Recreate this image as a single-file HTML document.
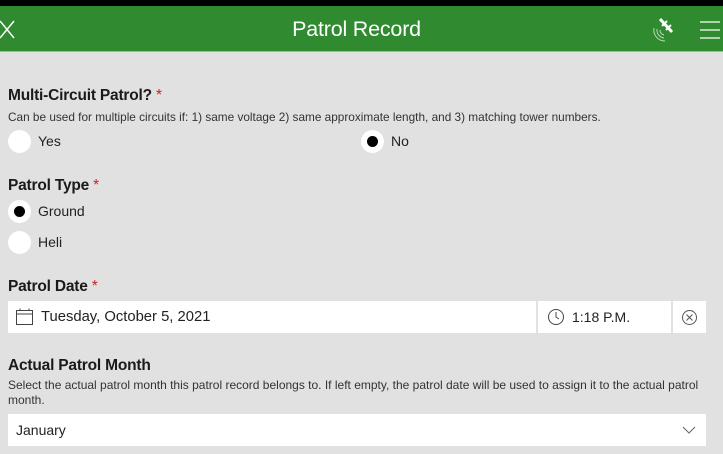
<!DOCTYPE html>
<html><head><meta charset="utf-8"><style>
*{margin:0;padding:0;box-sizing:border-box}
body{width:723px;height:454px;overflow:hidden;background:#e1e1e1;font-family:"Liberation Sans",sans-serif;color:#1a1a1a;position:relative}
.a{position:absolute;white-space:nowrap}
.top{left:0;top:0;width:723px;height:6px;background:#000}
.hdr{left:0;top:6px;width:723px;height:46px;background:#2f8a30;border-bottom:1px solid #8fc48f}
.title{left:-5px;width:723px;top:17px;text-align:center;color:#fff;font-family:"Liberation Sans",sans-serif;font-size:21.5px;letter-spacing:-0.2px}
.lbl{font-size:15.5px;font-weight:bold;font-family:"Liberation Sans Narrow","Liberation Sans",sans-serif;letter-spacing:-0.2px}
.star{color:#c22;font-weight:normal}
.desc{font-size:11.8px;font-family:"Liberation Sans Narrow","Liberation Sans",sans-serif;color:#333}
.rad{width:23px;height:23px;border-radius:50%;background:#fff}
.rad.on::after{content:"";position:absolute;left:6px;top:6px;width:11px;height:11px;border-radius:50%;background:#000}
.opt{font-size:14px;font-family:"Liberation Sans",sans-serif;color:#222}
.box{background:#fff}
</style></head><body>
<div class="a top"></div>
<div class="a hdr"></div>
<svg class="a" style="left:0;top:19px" width="16" height="22"><path d="M0 2 L14 19 M14 2 L0 19" stroke="#fff" stroke-width="1.5" fill="none"/></svg>
<div class="a title">Patrol Record</div>
<svg class="a" style="left:650px;top:16px" width="30" height="30"><path d="M10 3 L22 16" stroke="#fff" stroke-width="3"/><path d="M12 10 L17 5 M16 14 L21 9" stroke="#fff" stroke-width="2"/><path d="M10 14 A5 5 0 0 0 14 19 M7 13 A8 8 0 0 0 14 22 M4 12 A11 11 0 0 0 15 25" stroke="#b8dcb8" stroke-width="1" fill="none"/></svg>
<svg class="a" style="left:698px;top:20px" width="25" height="22"><path d="M2 2 H22 M2 10 H22 M2 18 H22" stroke="#d8ecd8" stroke-width="1.5"/></svg>

<div class="a lbl" style="left:8px;top:87px">Multi-Circuit Patrol? <span class="star">*</span></div>
<div class="a desc" style="left:8px;top:110px">Can be used for multiple circuits if: 1) same voltage 2) same approximate length, and 3) matching tower numbers.</div>
<div class="a rad" style="left:8px;top:130px"></div><div class="a opt" style="left:38px;top:133px">Yes</div>
<div class="a rad on" style="left:361px;top:130px"></div><div class="a opt" style="left:391px;top:133px">No</div>

<div class="a lbl" style="left:8px;top:177px">Patrol Type <span class="star">*</span></div>
<div class="a rad on" style="left:8px;top:200px"></div><div class="a opt" style="left:38px;top:203px">Ground</div>
<div class="a rad" style="left:8px;top:231px"></div><div class="a opt" style="left:38px;top:234px">Heli</div>

<div class="a lbl" style="left:8px;top:278px">Patrol Date <span class="star">*</span></div>
<div class="a box" style="left:8px;top:301px;width:528px;height:32px"></div>
<div class="a box" style="left:538px;top:301px;width:133px;height:32px"></div>
<div class="a box" style="left:673px;top:301px;width:33px;height:32px"></div>
<svg class="a" style="left:15px;top:308px" width="20" height="18"><rect x="1.5" y="2.5" width="16" height="14" fill="none" stroke="#444"/><path d="M1.5 6 H17.5 M5 0.5 V3 M14 0.5 V3" stroke="#444"/></svg>
<div class="a opt" style="left:41px;top:309px;font-size:14.8px">Tuesday, October 5, 2021</div>
<svg class="a" style="left:547px;top:308px" width="18" height="18"><circle cx="9" cy="9" r="7.5" fill="none" stroke="#444"/><path d="M9 4 V9 L12 11" stroke="#444" fill="none"/></svg>
<div class="a opt" style="left:572px;top:309px">1:18 P.M.</div>
<svg class="a" style="left:681px;top:309px" width="17" height="17"><circle cx="8.5" cy="8.5" r="7" fill="none" stroke="#555"/><path d="M5.5 5.5 L11.5 11.5 M11.5 5.5 L5.5 11.5" stroke="#555"/></svg>

<div class="a lbl" style="left:8px;top:357px">Actual Patrol Month</div>
<div class="a desc" style="left:8px;top:378px;font-size:12px">Select the actual patrol month this patrol record belongs to. If left empty, the patrol date will be used to assign it to the actual patrol</div>
<div class="a desc" style="left:8px;top:393px;font-size:12px">month.</div>
<div class="a box" style="left:8px;top:414px;width:698px;height:32px"></div>
<div class="a opt" style="left:16px;top:422px">January</div>
<svg class="a" style="left:682px;top:425px" width="14" height="10"><path d="M1 2 L7 8 L13 2" stroke="#666" fill="none"/></svg>
</body></html>
